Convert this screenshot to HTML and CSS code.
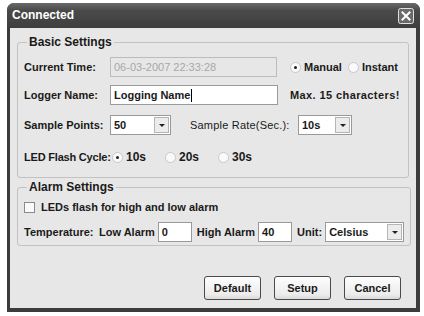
FILE: index.html
```html
<!DOCTYPE html>
<html lang="en">
<head>
    <meta charset="UTF-8">
    <title>Connected</title>
    <link rel="stylesheet" href="styles.css">
</head>
<body>

<div class="window">
    <div class="titlebar">
        <span class="title">Connected</span>
        <span class="close">
            <svg width="16" height="16" viewBox="0 0 16 16">
                <rect x="0.5" y="0.5" width="15" height="15" rx="2" fill="#6a6a6a" stroke="#e0e0e0"/>
                <path d="M4.5 4.5 L11.5 11.5 M11.5 4.5 L4.5 11.5" stroke="#fff" stroke-width="2" stroke-linecap="square"/>
            </svg>
        </span>
    </div>

    <div class="client">
        <fieldset class="group basic">
            <legend>Basic Settings</legend>

            <div class="row">
                <span class="label">Current Time:</span>
                <div class="field time disabled">06-03-2007 22:33:28</div>
                <span class="radio checked"></span><span class="opt manual">Manual</span>
                <span class="radio"></span><span class="opt">Instant</span>
            </div>

            <div class="row row-name">
                <span class="label">Logger Name:</span>
                <div class="field name">Logging Name<span class="caret"></span></div>
                <span class="hint">Max. 15 characters!</span>
            </div>

            <div class="row row-sample">
                <span class="label">Sample Points:</span>
                <div class="select points"><span class="value">50</span><span class="drop"></span></div>
                <span class="label rate">Sample Rate(Sec.):</span>
                <div class="select rate-sel"><span class="value">10s</span><span class="drop"></span></div>
            </div>

            <div class="row row-led">
                <span class="label led">LED Flash Cycle:</span>
                <span class="choice"><span class="radio checked"></span><span class="opt">10s</span></span>
                <span class="choice"><span class="radio"></span><span class="opt">20s</span></span>
                <span class="choice"><span class="radio"></span><span class="opt">30s</span></span>
            </div>
        </fieldset>

        <fieldset class="group alarm">
            <legend>Alarm Settings</legend>

            <div class="row">
                <span class="checkbox"></span><span class="opt">LEDs flash for high and low alarm</span>
            </div>

            <div class="row row-temp">
                <span class="label temp">Temperature:</span>
                <span class="sub">Low Alarm</span>
                <div class="field small">0</div>
                <span class="sub">High Alarm</span>
                <div class="field small">40</div>
                <span class="sub">Unit:</span>
                <div class="select unit"><span class="value">Celsius</span><span class="drop"></span></div>
            </div>
        </fieldset>

        <div class="buttons">
            <span class="button">Default</span>
            <span class="button">Setup</span>
            <span class="button">Cancel</span>
        </div>
    </div>
</div>

</body>
</html>
```

FILE: styles.css
```css
body {
    margin: 0;
    background-color: #fff;
    font-family: "Liberation Sans", Arial, sans-serif;
    font-size: 11px;
    font-weight: bold;
    color: #1a1a1a;
    white-space: nowrap;
}

.window {
    width: 413px;
    height: 309px;
    margin: 3px 0 0 7px;
    background-color: #3c3c3c;
    border-radius: 7px 7px 0 0;
    display: flex;
    flex-direction: column;
}

.titlebar {
    height: 25px;
    display: flex;
    align-items: center;
    justify-content: space-between;
    padding: 0 6px 0 5px;
    background: linear-gradient(#6a6a6a, #4a4a4a 30%, #3e3e3e);
    border-radius: 7px 7px 0 0;
}

.title {
    color: #fff;
    font-size: 12px;
    font-weight: bold;
    margin-top: -1px;
}

.close {
    display: flex;
    margin-top: 1px;
}

.client {
    flex: 1;
    margin: 0 4px 4px 3px;
    background-color: #e7e7e7;
    padding: 7px 7px 0 7px;
}

.group {
    margin: 0;
    padding: 8px 6px 10px 6px;
    border: 1px solid #c2c2c2;
    border-radius: 3px;
}

.group legend {
    padding: 0 2px;
    margin-left: 3px;
    font-size: 12px;
    line-height: 14px;
}

.row {
    display: flex;
    align-items: center;
    height: 20px;
}

.row-name {
    margin-top: 8px;
}

.row-sample {
    margin-top: 10px;
}

.row-led {
    margin-top: 12px;
}

.label {
    width: 86px;
    flex-shrink: 0;
}

.field {
    height: 20px;
    box-sizing: border-box;
    border: 1px solid #9a9a9a;
    background-color: #fff;
    padding: 0 3px;
    line-height: 18px;
    display: flex;
    align-items: center;
    flex-shrink: 0;
}

.field.disabled {
    background-color: #e7e7e7;
    border-color: #bcbcbc;
    color: #a8a8a8;
    font-weight: normal;
}

.time {
    width: 167px;
    margin-right: 13px;
}

.name {
    width: 168px;
    margin-right: 12px;
}

.caret {
    width: 1px;
    height: 13px;
    background-color: #000;
    margin-left: 1px;
}

.radio {
    width: 11px;
    height: 11px;
    box-sizing: border-box;
    border-radius: 50%;
    background-color: #fafafa;
    border: 1px solid #c8c8c8;
    position: relative;
    flex-shrink: 0;
    margin-right: 3px;
}

.radio.checked::after {
    content: "";
    position: absolute;
    left: 3px;
    top: 3px;
    width: 3px;
    height: 3px;
    border-radius: 50%;
    background-color: #222;
}

.opt.manual {
    margin-right: 6px;
}

.hint {
    letter-spacing: 0.4px;
}

.select {
    height: 20px;
    box-sizing: border-box;
    border: 1px solid #9a9a9a;
    background-color: #fff;
    display: flex;
    align-items: center;
    padding: 1px;
    flex-shrink: 0;
}

.select .value {
    flex: 1;
    padding-left: 2px;
}

.select .drop {
    width: 15px;
    height: 16px;
    box-sizing: border-box;
    border: 1px solid #b5b5b5;
    background-color: #ececec;
    position: relative;
}

.select .drop::after {
    content: "";
    position: absolute;
    left: 4px;
    top: 6px;
    border-left: 3px solid transparent;
    border-right: 3px solid transparent;
    border-top: 3px solid #222;
}

.points {
    width: 61px;
    margin-right: 19px;
}

.label.rate {
    width: 108px;
    font-weight: normal;
    letter-spacing: 0.2px;
}

.rate-sel {
    width: 54px;
}

.label.led {
    width: 88px;
    letter-spacing: -0.2px;
}

.choice {
    display: flex;
    align-items: center;
    width: 53px;
}

.choice .opt {
    font-size: 12px;
}

.alarm {
    margin-top: 2px;
    padding: 3px 6px 3px 6px;
}

.checkbox {
    width: 11px;
    height: 11px;
    box-sizing: border-box;
    border: 1px solid #8a8a8a;
    background-color: #fafafa;
    margin-right: 6px;
}

.row-temp {
    margin-top: 5px;
}

.label.temp {
    width: 75px;
}

.sub {
    margin-right: 3px;
}

.field.small {
    width: 34px;
    margin-right: 5px;
}

.unit {
    width: 79px;
}

.buttons {
    display: flex;
    justify-content: flex-end;
    gap: 13px;
    margin-top: 30px;
    padding-right: 8px;
}

.button {
    width: 57px;
    height: 24px;
    box-sizing: border-box;
    border: 1px solid #4a4a4a;
    border-radius: 3px;
    background: linear-gradient(#fdfdfd, #ececec 80%, #d8d8d8);
    display: flex;
    align-items: center;
    justify-content: center;
}
```
